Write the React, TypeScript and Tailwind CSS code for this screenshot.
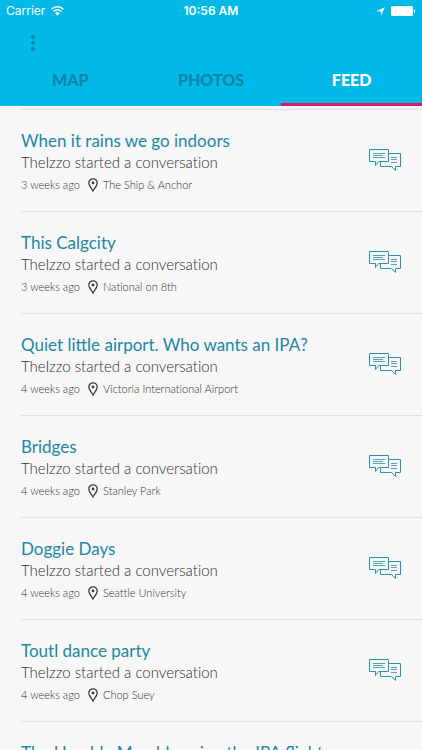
interface FeedItem {
  id: number;
  title: string;
  author: string;
  time: string;
  place: string;
}

const feed: FeedItem[] = [
  { id: 1, title: "When it rains we go indoors", author: "TheIzzo", time: "3 weeks ago", place: "The Ship & Anchor" },
  { id: 2, title: "This Calgcity", author: "TheIzzo", time: "3 weeks ago", place: "National on 8th" },
  { id: 3, title: "Quiet little airport. Who wants an IPA?", author: "TheIzzo", time: "4 weeks ago", place: "Victoria International Airport" },
  { id: 4, title: "Bridges", author: "TheIzzo", time: "4 weeks ago", place: "Stanley Park" },
  { id: 5, title: "Doggie Days", author: "TheIzzo", time: "4 weeks ago", place: "Seattle University" },
  { id: 6, title: "Toutl dance party", author: "TheIzzo", time: "4 weeks ago", place: "Chop Suey" },
  { id: 7, title: "The Humble Mumble using the IPA flight", author: "TheIzzo", time: "4 weeks ago", place: "Chop Suey" },
];

const tabs = ["MAP", "PHOTOS", "FEED"];

const WifiIcon = () => (
  <svg width="13" height="10" viewBox="0 0 13 10" fill="none" stroke="white" strokeWidth="1.5">
    <path d="M0.6 3.3a8.3 8.3 0 0 1 11.8 0" />
    <path d="M2.6 5.5a5.4 5.4 0 0 1 7.8 0" />
    <path d="M4.1 7.2a3.4 3.4 0 0 1 4.8 0L6.5 9.7z" fill="white" stroke="none" />
  </svg>
);

const LocationArrowIcon = () => (
  <svg width="9" height="9" viewBox="0 0 9 9" fill="white">
    <path d="M8.8 0.2 4.9 8.7V4.2H0.3z" />
  </svg>
);

const BatteryIcon = () => (
  <svg width="25" height="10" viewBox="0 0 25 10" fill="white">
    <rect width="22" height="10" rx="1.5" />
    <path d="M23 3.2c1.6.5 1.6 3.1 0 3.6z" />
  </svg>
);

const PinIcon = () => (
  <svg width="10" height="14" viewBox="0 0 10 14" fill="none" stroke="#3c3c3c" strokeWidth="1.3">
    <path d="M5 12.9C4 10.8.8 7.9.8 5a4.2 4.2 0 0 1 8.4 0c0 2.9-3.2 5.8-4.2 7.9z" />
    <circle cx="5" cy="5" r="1.4" fill="#3c3c3c" stroke="none" />
  </svg>
);

const ChatIcon = () => (
  <svg width="34" height="26" viewBox="0 0 34 26" fill="none" stroke="#2b92a9">
    <path d="M12.5 13.5h-2l-3 4v-4h-6v-12h19v4" />
    <path d="M20.5 5.5h12v13h-5v4l-4-4h-11v-5h8z" />
    <path d="M5 5.500h12M5 7.500h10M5 9.500h12M23 9.500h6M23 11.500h6M23 14.500h6" strokeOpacity="0.8" />
  </svg>
);

const FeedRow = ({ title, author, time, place }: FeedItem) => (
  <li className="flex items-center justify-between ml-5 h-[102px] pl-px pr-5 border-t border-[#e4e4e4]">
    <div className="flex flex-col min-w-0 pt-[3px]">
      <h2 className="text-[17px] leading-[22px] text-[#1c87a2] whitespace-nowrap">{title}</h2>
      <p className="text-[15px] leading-5 font-light text-[#303030] [font-variant-ligatures:none]">
        {author} started a conversation
      </p>
      <div className="flex items-center mt-[3px] text-[11px] leading-5 font-light text-[#303030] [font-variant-ligatures:none]">
        <span className="w-[67px]">{time}</span>
        <PinIcon />
        <span className="ml-[5px]">{place}</span>
      </div>
    </div>
    <button aria-label={`Open ${title}`} className="shrink-0">
      <ChatIcon />
    </button>
  </li>
);

const App = () => {
  return (
    <div className="flex flex-col h-screen bg-[#f7f7f7] font-['Lato',sans-serif]">
      <header className="shrink-0 bg-[#02b9e8]">
        <div className="grid grid-cols-3 items-center h-[22px] px-[6px] text-white text-xs font-['Inter',sans-serif]">
          <div className="flex items-center gap-[6px]">
            <span>Carrier</span>
            <WifiIcon />
          </div>
          <span className="text-center font-semibold">10:56 AM</span>
          <div className="flex items-center justify-end gap-[6px]">
            <LocationArrowIcon />
            <BatteryIcon />
          </div>
        </div>
        <div className="flex items-center h-[42px] pl-[30px]">
          <button aria-label="Menu">
            <svg width="6" height="18" viewBox="0 0 6 18" fill="#0a86a8">
              <circle cx="3" cy="3" r="2.1" />
              <circle cx="3" cy="9" r="2.1" />
              <circle cx="3" cy="15" r="2.1" />
            </svg>
          </button>
        </div>
        <nav className="grid grid-cols-3 h-[42px]">
          {tabs.map((tab) => (
            <button
              key={tab}
              className={
                tab === "FEED"
                  ? "pb-2 border-b-3 border-[#e0156f] text-base font-black text-white"
                  : "pb-2 border-b-3 border-transparent text-base font-black text-[#0a86a8]"
              }
            >
              {tab}
            </button>
          ))}
        </nav>
      </header>
      <main className="flex-1 min-h-0 overflow-y-auto pt-[3px] [scrollbar-width:none]">
        <ul>
          {feed.map((item) => (
            <FeedRow key={item.id} {...item} />
          ))}
        </ul>
      </main>
    </div>
  );
};

export default App;
